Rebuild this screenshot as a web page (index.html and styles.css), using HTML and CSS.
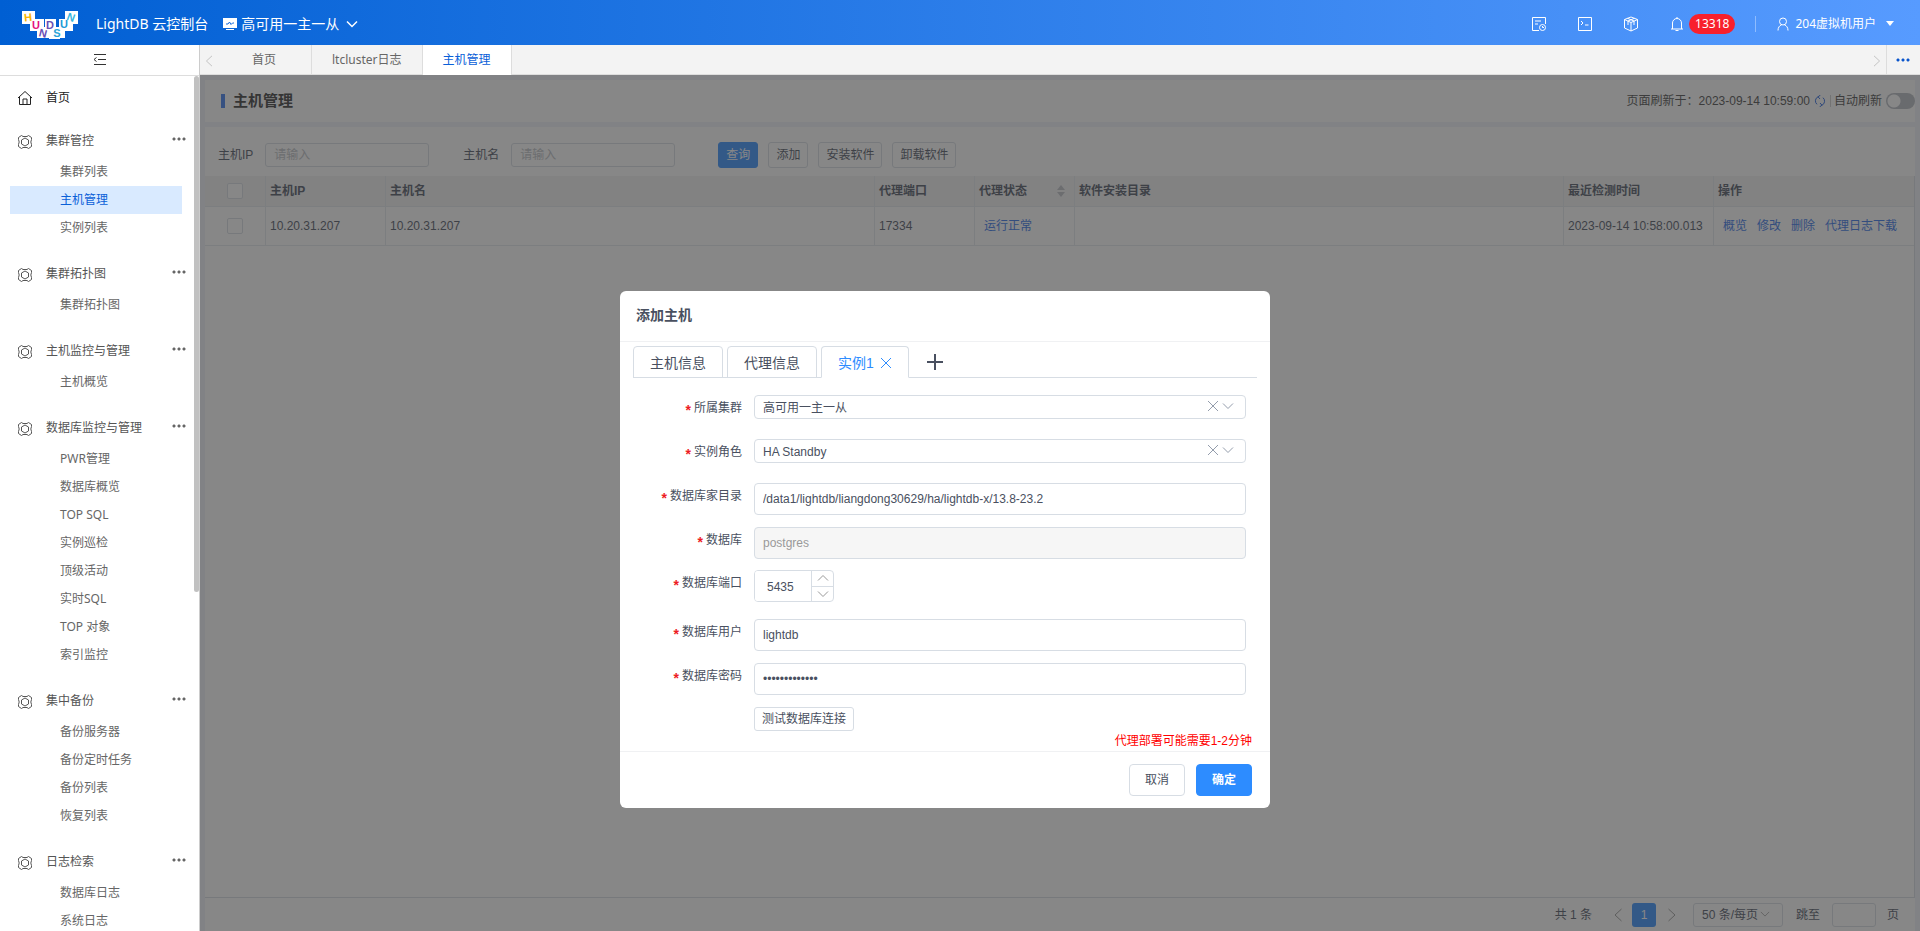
FILE: index.html
```html
<!DOCTYPE html>
<html lang="zh-CN">
<head>
<meta charset="utf-8">
<title>LightDB 云控制台</title>
<link rel="stylesheet" href="styles.css">
</head>
<body>
<svg class="defs" aria-hidden="true">
  <symbol id="hex" viewBox="0 0 16 16"><path d="M4.500 1.500L6 2.500h4l1.500-1L14.500 3.500v2L13.800 8l.7 2.500v2l-3 2-1.500-1H6l-1.500 1-3-2v-2L2.200 8l-.7-2.500v-2zM8 4l3.500 2v4L8 12l-3.500-2V6z"/></symbol>
  <symbol id="down" viewBox="0 0 12 12"><path d="M1 3.500l5 5 5-5"/></symbol>
  <symbol id="cross" viewBox="0 0 12 12"><path d="M1 1l10 10M11 1L1 11"/></symbol>
  <symbol id="left" viewBox="0 0 12 14"><path d="M9.500 1L3 7l6.500 6"/></symbol>
  <symbol id="right" viewBox="0 0 12 14"><path d="M2.500 1L9 7l-6.500 6"/></symbol>
</svg>
<div class="app">
  <header class="topbar">
    <svg class="logo" viewBox="0 0 56 28" role="img" aria-label="HUNDSUN">
      <path fill="#fff" d="M0 0h13v8h9v8h1V8h11v8h3V8h6V0h13v13h-5v7h-8v7H38v1H27v-1H15v-7H8v-7H0z"/>
      <g class="logo-letters">
        <text x="6" y="10" fill="#f8b500" transform="rotate(-6 6 6)">H</text>
        <text x="14" y="18" fill="#e5127d">U</text>
        <text x="21" y="26" fill="#6a4fb5" transform="rotate(14 21 22)">N</text>
        <text x="28" y="18" fill="#6a4fb5">D</text>
        <text x="35" y="26" fill="#2aa5d8">S</text>
        <text x="42" y="17" fill="#1c9bd7">U</text>
        <text x="49" y="10" fill="#35b5e0" transform="rotate(20 49 6)">N</text>
      </g>
    </svg>
    <span class="product">LightDB 云控制台</span>
    <button class="cluster-switch">
      <svg class="i14" viewBox="0 0 14 14"><path fill="#fff" d="M0 1h14v10H0zM3 12h8v1H3z"/><path d="M3 7h2l1.500-2L8 7.500 9.500 6H11" fill="none" stroke="#1268da"/></svg>
      <span>高可用一主一从</span>
      <svg class="i12 line"><use href="#down"/></svg>
    </button>
    <div class="tools">
      <button aria-label="任务"><svg class="i16 line" viewBox="0 0 16 16"><path d="M14.500 8V1.500h-13v13H8M4 5h6M4 8h3"/><circle cx="11.500" cy="11.500" r="3"/><path d="M11.500 10v1.500H13"/></svg></button>
      <button aria-label="终端"><svg class="i16 line" viewBox="0 0 16 16"><path d="M1.500 1.500h13v13h-13zM4 5l2 2-2 2M8 9h3.500"/></svg></button>
      <button aria-label="组件"><svg class="i16 line" viewBox="0 0 16 16"><path d="M8 1l6.500 2.500v8.500L8 15l-6.500-3V3.500zM1.500 3.500L8 6.500l6.500-3M8 6.500V15M4.500 2.300L11 5v4M11.500 2.300L5 5v4"/></svg></button>
      <button class="bell"><svg class="i16 line" viewBox="0 0 16 16"><path d="M2 13h12M3.500 13V7a4.500 4.500 0 0 1 9 0v6M6.500 14.500h3M8 1v1.500"/></svg><span class="badge">13318</span></button>
      <span class="sep"></span>
      <button class="user"><svg class="i14 line" viewBox="0 0 14 14"><circle cx="7" cy="4.500" r="3.500"/><path d="M2 13.500c0-3 1.500-5 3.500-5.500M12 13.500c0-3-1.500-5-3.500-5.500"/></svg><span>204虚拟机用户</span><i class="caret"></i></button>
    </div>
  </header>

  <div class="body">
    <aside class="sidebar">
      <button class="collapse" aria-label="收起菜单"><svg class="i14" viewBox="0 0 14 14"><path d="M1 1.500h12M5 6.500h8M1 11.500h12M3.500 4.500L1 6.500l2.500 2" fill="none" stroke="#333"/></svg></button>
      <nav class="menu">
        <a class="home" href="#"><svg class="i16 line" viewBox="0 0 16 16"><path d="M1 8l7-6.500L15 8M2.500 7v7.500h11V7M6 14.500V9h4v5.500"/></svg><span>首页</span></a>
        <section><div class="group"><svg class="i16 line"><use href="#hex"/></svg><span>集群管控</span><i class="dots"></i></div>
          <a href="#">集群列表</a><a href="#" class="active">主机管理</a><a href="#">实例列表</a></section>
        <section><div class="group"><svg class="i16 line"><use href="#hex"/></svg><span>集群拓扑图</span><i class="dots"></i></div>
          <a href="#">集群拓扑图</a></section>
        <section><div class="group"><svg class="i16 line"><use href="#hex"/></svg><span>主机监控与管理</span><i class="dots"></i></div>
          <a href="#">主机概览</a></section>
        <section><div class="group"><svg class="i16 line"><use href="#hex"/></svg><span>数据库监控与管理</span><i class="dots"></i></div>
          <a href="#">PWR管理</a><a href="#">数据库概览</a><a href="#">TOP SQL</a><a href="#">实例巡检</a><a href="#">顶级活动</a><a href="#">实时SQL</a><a href="#">TOP 对象</a><a href="#">索引监控</a></section>
        <section><div class="group"><svg class="i16 line"><use href="#hex"/></svg><span>集中备份</span><i class="dots"></i></div>
          <a href="#">备份服务器</a><a href="#">备份定时任务</a><a href="#">备份列表</a><a href="#">恢复列表</a></section>
        <section><div class="group"><svg class="i16 line"><use href="#hex"/></svg><span>日志检索</span><i class="dots"></i></div>
          <a href="#">数据库日志</a><a href="#">系统日志</a></section>
        <span class="thumb"></span>
      </nav>
    </aside>

    <div class="workspace">
      <div class="tabbar">
        <button class="arrow" aria-label="向左"><svg class="i12 line"><use href="#left"/></svg></button>
        <a href="#" class="tab first">首页</a><a href="#" class="tab">ltcluster日志</a><a href="#" class="tab current">主机管理</a>
        <button class="arrow end" aria-label="向右"><svg class="i12 line"><use href="#right"/></svg></button>
        <button class="more" aria-label="更多"><i class="dots"></i></button>
      </div>
      <main class="content">
        <div class="panel titlebar">
          <h1>主机管理</h1>
          <div class="refresh"><span>页面刷新于：2023-09-14 10:59:00</span>
            <svg class="i12 blue" viewBox="0 0 12 12"><path d="M4 1.800a4.500 4.500 0 0 0-1 7.500M8 10.200a4.500 4.500 0 0 0 1-7.500M6.500 0L4 1.800l2 2.200M5.500 12L8 10.200 6 8"/></svg>
            <span class="vbar"></span><label for="auto">自动刷新</label><input id="auto" class="switch" type="checkbox"></div>
        </div>
        <div class="panel listing">
          <form class="filters">
            <label for="ip">主机IP</label><input id="ip" placeholder="请输入">
            <label for="host" class="second">主机名</label><input id="host" placeholder="请输入">
            <div class="actions"><button type="button" class="primary">查询</button><button type="button">添加</button><button type="button">安装软件</button><button type="button">卸载软件</button></div>
          </form>
          <div class="table-area">
            <table>
              <colgroup><col class="c-check"><col class="c-ip"><col><col class="c-s"><col class="c-s"><col><col class="c-time"><col class="c-ops"></colgroup>
              <thead><tr><th><input type="checkbox" aria-label="全选"></th><th>主机IP</th><th>主机名</th><th>代理端口</th><th><span class="sortable">代理状态<i class="sort"></i></span></th><th>软件安装目录</th><th>最近检测时间</th><th>操作</th></tr></thead>
              <tbody><tr><td><input type="checkbox" aria-label="选择 10.20.31.207"></td><td>10.20.31.207</td><td>10.20.31.207</td><td>17334</td><td class="links"><a href="#">运行正常</a></td><td></td><td>2023-09-14 10:58:00.013</td><td class="links"><a href="#">概览</a><a href="#">修改</a><a href="#">删除</a><a href="#">代理日志下载</a></td></tr></tbody>
            </table>
          </div>
          <div class="pager">
            <span>共 1 条</span>
            <button class="step" aria-label="上一页"><svg class="i14 line"><use href="#left"/></svg></button>
            <button class="page">1</button>
            <button class="step" aria-label="下一页"><svg class="i14 line"><use href="#right"/></svg></button>
            <span class="size"><select aria-label="每页条数"><option>50 条/每页</option></select><svg class="i10 line"><use href="#down"/></svg></span>
            <label for="jump">跳至</label><input id="jump"><span>页</span>
          </div>
        </div>
        <div class="mask"></div>
      </main>
    </div>
  </div>
</div>

<div class="dialog-wrap">
  <div class="dialog" role="dialog" aria-labelledby="dlg-title">
    <h2 id="dlg-title">添加主机</h2>
    <div class="dialog-body">
      <div class="dtabs">
        <button>主机信息</button><button>代理信息</button><button class="current">实例1<svg class="i12"><use href="#cross"/></svg></button>
        <span class="plus-wrap"><button class="plus" aria-label="新增实例"><svg class="i16" viewBox="0 0 16 16"><path d="M0 8h16M8 0v16"/></svg></button></span>
      </div>
      <form class="fields">
        <div class="row"><label for="f1">所属集群</label><div class="pick"><select id="f1"><option>高可用一主一从</option></select><span class="pick-icons"><svg class="i12"><use href="#cross"/></svg><svg class="i12"><use href="#down"/></svg></span></div></div>
        <div class="row"><label for="f2">实例角色</label><div class="pick"><select id="f2"><option>HA Standby</option></select><span class="pick-icons"><svg class="i12"><use href="#cross"/></svg><svg class="i12"><use href="#down"/></svg></span></div></div>
        <div class="row"><label for="f3">数据库家目录</label><input id="f3" value="/data1/lightdb/liangdong30629/ha/lightdb-x/13.8-23.2"></div>
        <div class="row last-text"><label for="f4">数据库</label><input id="f4" value="postgres" disabled></div>
        <div class="row port"><label for="f5">数据库端口</label><div class="number"><input id="f5" value="5435"><div class="spin"><button type="button" aria-label="增加"><svg class="i12 flip"><use href="#down"/></svg></button><button type="button" aria-label="减少"><svg class="i12"><use href="#down"/></svg></button></div></div></div>
        <div class="row"><label for="f6">数据库用户</label><input id="f6" value="lightdb"></div>
        <div class="row"><label for="f7">数据库密码</label><input id="f7" type="password" value="lightdb123456"></div>
        <div class="row test"><button type="button">测试数据库连接</button></div>
      </form>
      <p class="note">代理部署可能需要1-2分钟</p>
    </div>
    <footer><button>取消</button><button class="ok">确定</button></footer>
  </div>
</div>
</body>
</html>
```
FILE: styles.css
```css
* { box-sizing: border-box; }
html, body { height: 100%; margin: 0; }
body {
  overflow: hidden;
  font: 12px/18px "Liberation Sans", "Noto Sans CJK SC", sans-serif;
  color: #495060;
}
button, input, select { font: inherit; color: inherit; }
button { padding: 0; border: 0; background: none; }
a { color: inherit; text-decoration: none; }
input, select { outline: 0; }
.defs { position: absolute; width: 0; height: 0; }
svg { display: block; flex: none; }
.i10 { width: 10px; height: 10px; }
.i12 { width: 12px; height: 12px; }
.i14 { width: 14px; height: 14px; }
.i16 { width: 16px; height: 16px; }
.line { fill: none; stroke: currentColor; }

.app { display: flex; flex-direction: column; height: 100%; }
.topbar, .sidebar, .tabbar { font-family: "Noto Sans", "Noto Sans CJK SC", sans-serif; }

/* top bar */
.topbar {
  display: flex; align-items: center; flex: none;
  height: 45px; padding: 2px 26px 0 22px;
  color: #fff; background: linear-gradient(90deg, #005fd3, #579bff);
}
.topbar button { display: flex; align-items: center; }
.logo { width: 56px; height: 28px; margin-top: 3px; }
.logo-letters { font: bold 11px "Liberation Sans", sans-serif; text-anchor: middle; }
.product { margin-left: 18px; font-size: 14px; }
.cluster-switch { margin-left: 15px; gap: 4px; font-size: 14px; }
.cluster-switch .line { margin-left: 3px; stroke-width: 1.5; }
.tools { display: flex; align-items: center; margin-left: auto; gap: 30px; }
.bell { gap: 4px; }
.badge { height: 20px; padding: 0 6px; border-radius: 10px; background: #f8202c; line-height: 20px; }
.tools .sep { width: 1px; height: 16px; margin: 0 -10px; background: #8ebcff; }
.user { gap: 5px; }
.caret { margin-left: 5px; border: 4px solid transparent; border-top: 5px solid #fff; border-bottom: 0; }

/* side menu */
.body { display: flex; flex: 1; min-height: 0; }
.sidebar { display: flex; flex-direction: column; flex: none; width: 200px; border-right: 1px solid #ccc; background: #fff; }
.collapse { display: flex; align-items: center; justify-content: center; flex: none; height: 31px; border-bottom: 1px solid #ddd; }
.menu { position: relative; flex: 1; overflow: hidden; padding-top: 4px; color: #666; }
.thumb { position: absolute; top: 0; right: 0; width: 5px; height: 60.4%; border-radius: 3px; background: #c1c1c1; }
.home, .group { display: flex; align-items: center; gap: 13px; height: 35px; padding: 0 12px 0 17px; }
.home { color: #222; margin-bottom: 8px; }
.group { color: #555; }
.group svg { margin-top: 2px; color: #555; }
.menu section { padding-bottom: 14px; }
.menu section a { display: block; height: 28px; margin: 0 17px 0 10px; padding-left: 50px; line-height: 28px; }
.menu section .active { color: #0a60d8; background: #d9eaff; }
.dots { width: 15px; height: 4px; background: radial-gradient(circle at 2px 2px, currentColor 0 1px, transparent 2px) 0 0 / 5px 4px; }
.group .dots { margin: 0 0 4px auto; color: #666; }

/* page tabs */
.workspace { display: flex; flex-direction: column; flex: 1; min-width: 0; }
.tabbar { display: flex; flex: none; height: 30px; border-bottom: 1px solid #ddd; background: #f3f3f3; color: #666; }
.tab { padding: 0 20px; border-right: 1px solid #ddd; line-height: 30px; }
.tab.first { padding: 0 35px 0 36px; }
.tab.current { height: 30px; background: #fff; color: #0a60d8; }
.arrow { width: 16px; padding: 2px 0 0 3px; color: #bbb; }
.arrow.end { width: 18px; margin-left: auto; }
.more { display: grid; place-items: center; width: 34px; border-left: 1px solid #ddd; color: #0a55cc; }

/* page content */
.content { position: relative; display: flex; flex-direction: column; flex: 1; gap: 5px; padding: 5px 5px 0; background: #f0f3f9; }
.mask { position: absolute; inset: 0; background: rgba(55, 55, 55, .6); }
.panel { background: #fff; }
.titlebar { display: flex; align-items: center; height: 42px; padding-left: 16px; }
h1 { margin: 0; padding-left: 8px; border-left: 4px solid #3878f0; font-size: 15px; line-height: 14px; color: #333; font-weight: 600; }
.refresh { display: flex; align-items: center; gap: 4px; margin-left: auto; color: #444; }
.blue { fill: none; stroke: #2060e0; }
.vbar { width: 1px; height: 12px; margin-right: -1px; background: #ccc; }
.switch { appearance: none; width: 29px; height: 16px; margin: 0; border-radius: 8px; background: radial-gradient(circle at 8px 8px, #fff 0 6px, transparent 7px) #b4b8c0; }
.listing { display: flex; flex-direction: column; flex: 1; min-height: 0; }
.filters { display: flex; align-items: center; height: 49px; padding: 7px 13px 0; }
.filters input { width: 164px; height: 24px; margin-left: 12px; padding: 0 8px; border: 1px solid #d7dde4; border-radius: 3px; background: #fff; }
::placeholder { color: #bbbec4; }
.second { margin-left: 34px; }
.actions { display: flex; gap: 10px; margin-left: 43px; }
.actions button { height: 26px; padding: 0 7px; border: 1px solid #d7dde4; border-radius: 3px; }
.actions .primary { border-color: #2d8cff; background: #2d8cff; color: #fff; }
.table-area { flex: 1; border: solid #d7dde4; border-width: 0 1px 1px 0; }
table { width: 100%; table-layout: fixed; border-spacing: 0; }
th, td { padding: 0 4px; border: solid #e3e8ee; border-width: 0 1px 1px 0; text-align: left; }
th { height: 31px; background: #f2f2f3; font-weight: 600; }
td { height: 39px; }
th:last-child, td:last-child { border-right: 0; }
th:first-child, td:first-child { padding: 0; text-align: center; }
td input, th input { appearance: none; display: block; width: 16px; height: 16px; margin: 0 auto; border: 1px solid #d7dde4; border-radius: 2px; background: #fff; }
.c-check { width: 61px; }
.c-ip { width: 120px; }
.c-s { width: 100px; }
.c-time { width: 150px; }
.c-ops { width: 200px; }
td.links { padding-left: 9px; color: #2d6ee8; white-space: nowrap; }
.links a { margin-right: 10px; }
.links a:last-child { margin-right: 0; }
.sortable { display: flex; align-items: center; justify-content: space-between; padding-right: 5px; }
.sort { display: grid; gap: 2px; }
.sort::before, .sort::after { content: ""; border: 4px solid transparent; border-top-width: 0; border-bottom: 5px solid #bbbec4; }
.sort::after { transform: rotate(180deg); }
.pager { display: flex; align-items: center; justify-content: flex-end; height: 33px; padding-right: 16px; }
.step { width: 14px; margin-left: 19px; color: #999; }
.page { width: 24px; height: 24px; margin-left: 7px; border-radius: 3px; background: #2d8cff; color: #fff; }
.page + .step { margin-left: 9px; }
.size { position: relative; margin: 0 13px 0 14px; }
.size select { appearance: none; width: 90px; height: 24px; padding: 0 8px; border: 1px solid #d7dde4; border-radius: 3px; background: #fff; }
.size svg { position: absolute; right: 13px; top: 6px; color: #999; }
.pager input { width: 44px; height: 24px; margin: 0 11px 0 12px; border: 1px solid #d7dde4; border-radius: 3px; }

/* dialog */
.dialog-wrap { position: fixed; inset: 0; display: flex; align-items: flex-start; justify-content: center; padding: 291px 30px 0 0; }
.dialog { width: 650px; border-radius: 6px; background: #fff; }
h2 { margin: 0; padding: 13px 16px 15px; border-bottom: 1px solid #f0f1f3; font-size: 14px; line-height: 22px; font-weight: 600; }
.dialog-body { padding: 4px 13px 0; }
.dtabs { display: flex; gap: 4px; font-size: 14px; background: linear-gradient(#d7dde4, #d7dde4) bottom / 100% 1px no-repeat; }
.dtabs > button { display: flex; align-items: center; gap: 6px; height: 32px; padding: 1px 16px 0; border: 1px solid #d7dde4; border-radius: 4px 4px 0 0; }
.dtabs > .current { border-bottom-color: #fff; background: #fff; color: #2d8cff; }
.dtabs svg { fill: none; stroke: currentColor; }
.plus-wrap { display: flex; align-items: center; margin-left: 14px; }
.dtabs .plus svg { stroke-width: 2; }
.fields { padding: 17px 11px 0 0; }
.row { display: flex; align-items: flex-start; gap: 12px; margin-bottom: 12px; }
.row > label { width: 109px; line-height: 26px; text-align: right; white-space: nowrap; }
.row > label::before { content: "*"; margin-right: 3px; color: #ed1c24; font-size: 14px; font-weight: bold; line-height: 14px; vertical-align: -3px; }
.row > input, .pick select, .number { height: 32px; border: 1px solid #d7dde4; border-radius: 4px; background: #fff; }
.row > input { flex: 1; padding: 0 8px; }
.row > input:disabled { background: #f6f6f6; color: #999; }
.pick { position: relative; flex: 1; height: 32px; }
.pick select { appearance: none; display: block; width: 100%; height: 24px; padding: 2px 8px 0; }
.pick-icons { position: absolute; right: 12px; top: 5px; display: flex; gap: 3px; color: #949dac; }
.pick svg, .spin svg { fill: none; stroke: currentColor; }
.row.last-text { margin-bottom: 11px; }
.row.port { margin-bottom: 17px; }
.number { display: flex; width: 80px; overflow: hidden; }
.number input { width: 56px; padding: 1px 12px 0; border: 0; }
.spin { display: grid; flex: 1; border-left: 1px solid #d7dde4; color: #999; }
.spin button { display: grid; place-items: center; }
.spin button + button { border-top: 1px solid #d7dde4; }
.flip { transform: rotate(180deg); }
.row.test { margin: 0; padding-left: 121px; }
.test button { width: 100px; height: 24px; border: 1px solid #d7dde4; border-radius: 3px; }
.note { margin: 0 5px 0 0; padding-top: 1px; line-height: 19px; text-align: right; color: #f00; }
.dialog footer { display: flex; justify-content: flex-end; gap: 11px; padding: 12px 18px; border-top: 1px solid #f0f1f3; }
.dialog footer button { width: 56px; height: 32px; border: 1px solid #d7dde4; border-radius: 4px; }
.dialog footer .ok { border-color: #2d8cff; background: #2d8cff; color: #fff; font-weight: 600; }
```
